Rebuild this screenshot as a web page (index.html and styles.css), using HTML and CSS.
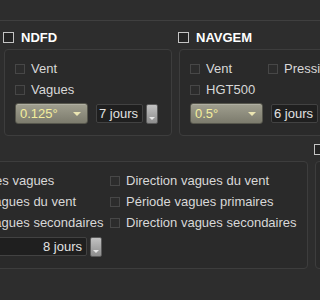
FILE: index.html
```html
<!DOCTYPE html>
<html lang="fr">
<head>
<meta charset="utf-8">
<title>Modèles</title>
<link rel="stylesheet" href="styles.css">
</head>
<body>
<div class="topbar"></div>

<div class="row row1">
  <section class="group ndfd">
    <label class="ghead"><span class="cb hd"></span>NDFD</label>
    <div class="panel">
      <div class="opts">
        <label class="opt"><span class="cb"></span>Vent</label>
        <label class="opt"><span class="cb"></span>Vagues</label>
      </div>
      <div class="controls">
        <div class="select">0.125°<span class="arrow"></span></div>
        <div class="field">7 jours</div>
        <div class="stepper"></div>
      </div>
    </div>
  </section>

  <section class="group navgem">
    <label class="ghead"><span class="cb hd"></span>NAVGEM</label>
    <div class="panel">
      <div class="opts two">
        <label class="opt"><span class="cb"></span>Vent</label>
        <label class="opt"><span class="cb"></span>Pression</label>
        <label class="opt"><span class="cb"></span>HGT500</label>
      </div>
      <div class="controls">
        <div class="select">0.5°<span class="arrow"></span></div>
        <div class="field">6 jours</div>
        <div class="stepper"></div>
      </div>
    </div>
  </section>
</div>

<div class="row row2">
  <section class="group ww3">
    <label class="ghead"><span class="cb hd"></span>WW3</label>
    <div class="panel">
      <div class="opts wave">
        <label class="opt"><span class="cb"></span>Hauteur des vagues</label>
        <label class="opt"><span class="cb"></span>Direction vagues du vent</label>
        <label class="opt"><span class="cb"></span>Hauteur vagues du vent</label>
        <label class="opt"><span class="cb"></span>Période vagues primaires</label>
        <label class="opt"><span class="cb"></span>Hauteur vagues secondaires</label>
        <label class="opt"><span class="cb"></span>Direction vagues secondaires</label>
      </div>
      <div class="controls">
        <div class="field wide">8 jours</div>
        <div class="stepper"></div>
      </div>
    </div>
  </section>

  <section class="group other">
    <label class="ghead"><span class="cb hd"></span>GFS</label>
    <div class="panel fill"></div>
  </section>
</div>
</body>
</html>
```

FILE: styles.css
```css
body {
  margin: 0;
  width: 320px;
  height: 300px;
  overflow: hidden;
  background: #2d2d2d;
  color: #d8d8d8;
  font: 13px "Liberation Sans", Arial, sans-serif;
}

.topbar {
  height: 20px;
  border-bottom: 1px solid #3f3f3f;
}

.row {
  display: flex;
  flex-wrap: nowrap;
  gap: 7px;
}

.row1 {
  margin-top: 9px;
  padding-left: 4px;
}

.row2 {
  margin-top: 6px;
}

.group {
  flex: 0 0 auto;
  display: flex;
  flex-direction: column;
}

.ghead {
  display: flex;
  align-items: center;
  gap: 7px;
  height: 14px;
  margin-left: -1px;
  color: #ffffff;
  font-weight: bold;
  font-size: 13px;
  white-space: nowrap;
}

.panel {
  box-sizing: border-box;
  margin-top: 5px;
  padding: 8px 10px 11px;
  border: 1px solid #3d3d3d;
  border-radius: 4px;
  background: #2a2a2a;
}

.ndfd .panel { width: 168px; }
.navgem .panel { width: 220px; }

.ww3 { margin-left: -89px; }
.ww3 .panel { width: 397px; }

.other .panel { width: 120px; flex: 1; }

.opts {
  display: grid;
  grid-auto-rows: 21px;
}

.opts.two { grid-template-columns: 78px auto; }
.opts.wave { grid-template-columns: 188px auto; }

.opt {
  display: flex;
  align-items: center;
  gap: 6px;
  white-space: nowrap;
}

.cb {
  flex: none;
  box-sizing: border-box;
  width: 10px;
  height: 10px;
  border: 1px solid #474747;
  background: #2c2c2c;
}

.cb.hd {
  width: 11px;
  height: 11px;
  border-color: #c4c4c4;
  background: #242424;
}

.controls {
  display: flex;
  align-items: center;
  height: 21px;
  margin-top: 3px;
}

.select {
  box-sizing: border-box;
  display: flex;
  align-items: center;
  justify-content: space-between;
  width: 73px;
  height: 21px;
  padding: 0 6px 0 4px;
  margin-right: 8px;
  border: 1px solid #56564c;
  border-radius: 3px;
  background: linear-gradient(#a09f8f, #7c7b6d);
  color: #f4ee9c;
  box-shadow: inset 0 1px 0 rgba(255,255,255,0.18);
}

.arrow {
  width: 0;
  height: 0;
  border-left: 4px solid transparent;
  border-right: 4px solid transparent;
  border-top: 4px solid #ebe5b2;
}

.field {
  box-sizing: border-box;
  display: flex;
  align-items: center;
  justify-content: flex-end;
  width: 47px;
  height: 19px;
  padding-right: 4px;
  border: 1px solid #424242;
  border-radius: 2px;
  background: #1f1f1f;
  color: #e2e2e2;
  white-space: nowrap;
}

.field.wide { width: 165px; }

.stepper {
  position: relative;
  box-sizing: border-box;
  width: 12px;
  height: 20px;
  margin-left: 3px;
  border: 1px solid #5a5a5a;
  border-radius: 2px;
  background: linear-gradient(#c2c2c2, #a2a2a2 60%, #8e8e8e);
}

.stepper::after {
  content: "";
  position: absolute;
  left: 2px;
  bottom: 3px;
  border-left: 3px solid transparent;
  border-right: 3px solid transparent;
  border-top: 3px solid #e6e6e6;
}
```
